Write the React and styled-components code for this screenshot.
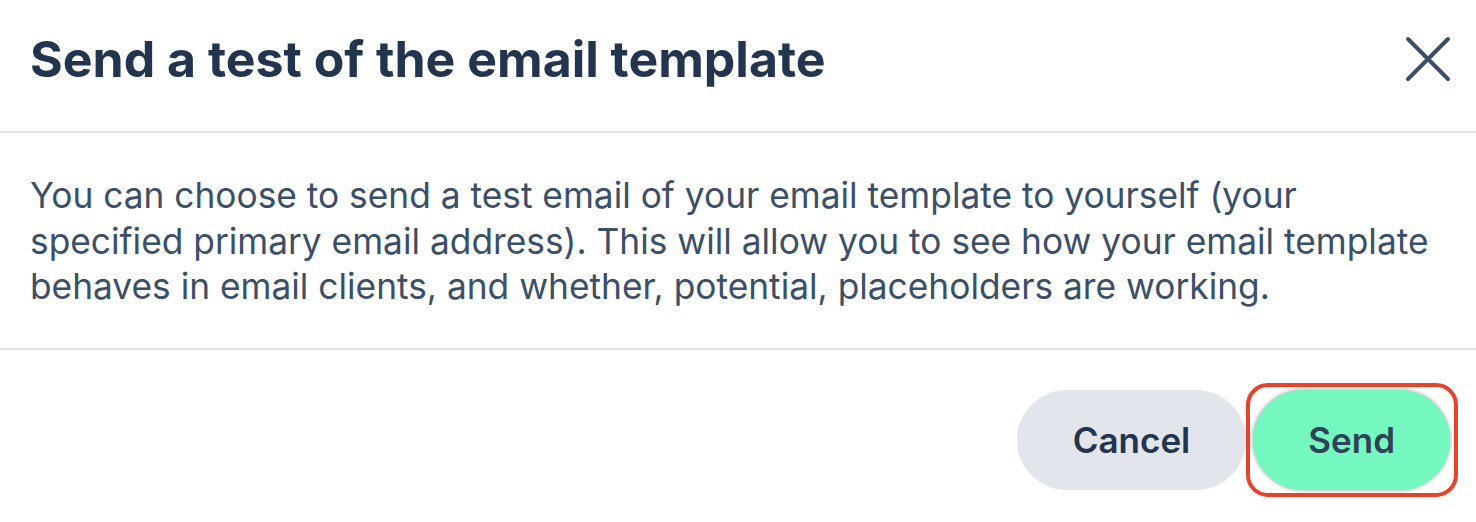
import React from "react";
import styled, { createGlobalStyle } from "styled-components";

const GlobalStyle = createGlobalStyle`
  html, body {
    margin: 0;
    padding: 0;
    background: #ffffff;
  }
  body {
    font-family: Inter, "Open Sans", sans-serif;
  }
`;

const App = () => {
  return (
    <>
      <GlobalStyle />
      <Dialog>
        <Header>
          <Title>Send a test of the email template</Title>
          <CloseButton aria-label="Close">
            <svg width="48" height="48" viewBox="0 0 48 48" fill="none">
              <path
                d="M4 4L44 44M44 4L4 44"
                stroke="#3b5068"
                strokeWidth="4"
                strokeLinecap="round"
              />
            </svg>
          </CloseButton>
        </Header>
        <Body>
          <Text>
            You can choose to send a test email of your email template to
            yourself (your specified primary email address). This will allow you
            to see how your email template behaves in email clients, and
            whether, potential, placeholders are working.
          </Text>
        </Body>
        <Footer>
          <Button>Cancel</Button>
          <SendWrap>
            <Button $primary>Send</Button>
            <Highlight />
          </SendWrap>
        </Footer>
      </Dialog>
    </>
  );
};

export default App;

const Dialog = styled.div`
  width: 1476px;
  height: 522px;
  background: #ffffff;
  display: flex;
  flex-direction: column;
  overflow: hidden;

  & > * {
    flex-shrink: 0;
  }
`;

const Header = styled.div`
  height: 133px;
  padding: 0 24px 14px 30px;
  box-sizing: border-box;
  display: flex;
  align-items: center;
  justify-content: space-between;
  border-bottom: 2px solid #e2e6ec;
`;

const Title = styled.h1`
  margin: 0;
  font-size: 50px;
  line-height: 1.2;
  font-weight: 700;
  color: #22344e;
`;

const CloseButton = styled.button`
  border: none;
  background: none;
  padding: 0;
  width: 48px;
  height: 48px;
  display: flex;
  align-items: center;
  justify-content: center;
  cursor: pointer;
`;

const Body = styled.div`
  padding: 40px 30px 38px;
  border-bottom: 2px solid #e2e6ec;
`;

const Text = styled.p`
  margin: 0;
  font-size: 35.3px;
  line-height: 45.5px;
  color: #3b4f68;
`;

const Footer = styled.div`
  display: flex;
  justify-content: flex-end;
  align-items: center;
  gap: 7px;
  padding: 40px 26px 0 0;
`;

const SendWrap = styled.div`
  position: relative;
  display: flex;
`;

const Highlight = styled.div`
  position: absolute;
  top: -7px;
  right: -8px;
  bottom: -7px;
  left: -7px;
  border: 4px solid #e8432a;
  border-radius: 22px;
  pointer-events: none;
`;

const Button = styled.button`
  height: 100px;
  padding: 0 ${(p) => (p.$primary ? "55px" : "56px")};
  border: none;
  border-radius: 50px;
  font-family: Inter, "Open Sans", sans-serif;
  font-size: 35px;
  font-weight: 600;
  cursor: pointer;
  color: ${(p) => (p.$primary ? "#2f4256" : "#22344e")};
  background: ${(p) => (p.$primary ? "#74f8c0" : "#e2e5eb")};
  box-shadow: ${(p) =>
    p.$primary ? "0 0 4px rgba(0, 0, 0, 0.4)" : "none"};
`;
